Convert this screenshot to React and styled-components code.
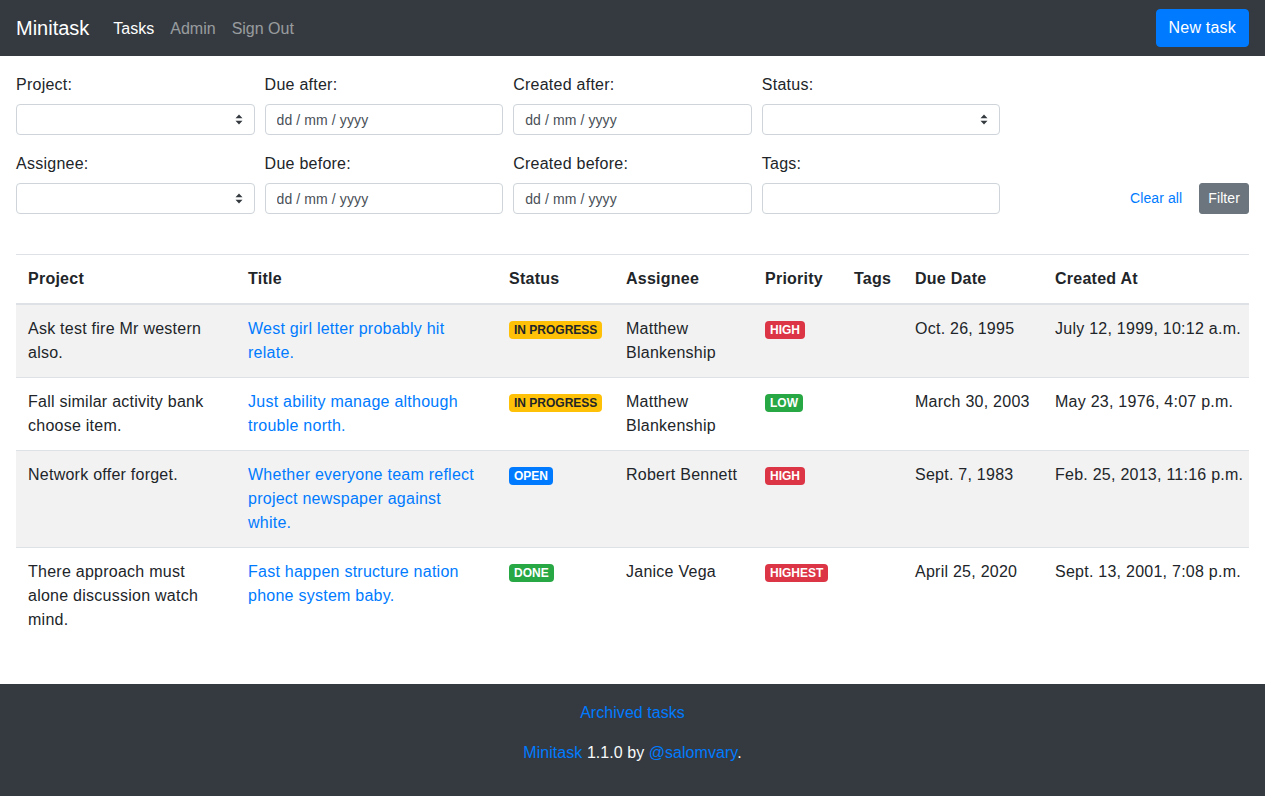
import React from "react";
import styled, { createGlobalStyle } from "styled-components";

const GlobalStyle = createGlobalStyle`
  * { box-sizing: border-box; }
  html, body { margin: 0; padding: 0; }
  body {
    font-family: "Liberation Sans", Arial, sans-serif;
    font-size: 16px;
    line-height: 1.5;
    letter-spacing: 0.25px;
    color: #212529;
    background: #fff;
  }
`;

const Page = styled.div`
  display: flex;
  flex-direction: column;
  min-height: 796px;
`;

const Navbar = styled.nav`
  height: 56px;
  background: #343a40;
  display: flex;
  align-items: center;
  padding: 0 16px;
  letter-spacing: 0;
`;

const Brand = styled.a`
  font-size: 20px;
  line-height: 30px;
  color: #fff;
  margin-right: 16px;
  text-decoration: none;
`;

const NavLink = styled.a`
  padding: 0 8px;
  line-height: 24px;
  margin-top: 2px;
  color: ${(p) => (p.$active ? "#fff" : "rgba(255,255,255,.5)")};
  text-decoration: none;
`;

const Spacer = styled.div`
  flex: 1;
`;

const PrimaryButton = styled.button`
  font-family: inherit;
  font-size: 16px;
  letter-spacing: 0.2px;
  line-height: 24px;
  padding: 6px 12px;
  border: 1px solid #007bff;
  background: #007bff;
  color: #fff;
  border-radius: 4px;
`;

const Main = styled.main`
  flex: 1;
  padding: 17px 16px 40px;
`;

const FilterForm = styled.form`
  display: grid;
  grid-template-columns: repeat(5, 1fr);
  column-gap: 10px;
  row-gap: 17px;
  margin: 0 0 40px;
  & > * { min-width: 0; }
`;

const Field = styled.div`
  display: flex;
  flex-direction: column;
`;

const Label = styled.label`
  display: block;
  margin-bottom: 7px;
`;

const SelectWrap = styled.div`
  position: relative;
`;

const Select = styled.select`
  appearance: none;
  width: 100%;
  height: 31px;
  font-family: inherit;
  font-size: 14px;
  padding: 4px 28px 4px 8px;
  border: 1px solid #ced4da;
  border-radius: 4px;
  background: #fff;
  color: #495057;
`;

const Arrow = styled.svg`
  position: absolute;
  right: 12px;
  top: 10px;
  pointer-events: none;
`;

const TextInput = styled.input`
  width: 100%;
  height: 31px;
  font-family: inherit;
  font-size: 14px;
  letter-spacing: 0.1px;
  padding: 4px 11px;
  border: 1px solid #ced4da;
  border-radius: 4px;
  background: #fff;
  color: #495057;
  outline: none;
`;

const Actions = styled.div`
  display: flex;
  justify-content: flex-end;
  align-items: flex-end;
  gap: 8px;
`;

const LinkButton = styled.button`
  font-family: inherit;
  font-size: 14px;
  letter-spacing: 0.1px;
  line-height: 21px;
  padding: 4px 8px;
  border: 1px solid transparent;
  background: none;
  color: #007bff;
  border-radius: 3px;
`;

const SecondaryButton = styled(LinkButton)`
  background: #6c757d;
  border-color: #6c757d;
  color: #fff;
`;

const Table = styled.table`
  width: 100%;
  border-collapse: collapse;
  table-layout: fixed;
`;

const Th = styled.th`
  text-align: left;
  font-weight: 700;
  padding: 12px;
  border-top: 1px solid #dee2e6;
  border-bottom: 2px solid #dee2e6;
  vertical-align: bottom;
`;

const Row = styled.tr`
  background: ${(p) => (p.$striped ? "rgba(0,0,0,.05)" : "transparent")};
`;

const Td = styled.td`
  padding: 12px;
  border-top: 1px solid #dee2e6;
  vertical-align: top;
  white-space: ${(p) => (p.$nowrap ? "nowrap" : "normal")};
`;

const TitleLink = styled.a`
  color: #007bff;
  text-decoration: none;
`;

const badgeColors = {
  warning: ["#ffc107", "#212529"],
  danger: ["#dc3545", "#fff"],
  success: ["#28a745", "#fff"],
  primary: ["#007bff", "#fff"],
};

const Badge = styled.span`
  display: inline-block;
  white-space: nowrap;
  font-size: 12px;
  font-weight: 700;
  letter-spacing: 0;
  line-height: 1;
  padding: 3px 5px;
  border-radius: 4px;
  margin-top: 1px;
  background: ${(p) => badgeColors[p.$kind][0]};
  color: ${(p) => badgeColors[p.$kind][1]};
`;

const Footer = styled.footer`
  background: #343a40;
  color: #f8f9fa;
  text-align: center;
  padding: 17px 16px 16px;
  letter-spacing: 0.05px;
`;

const FooterLine = styled.p`
  margin: 0 0 16px;
`;

const FooterLink = styled.a`
  color: #007bff;
  text-decoration: none;
`;

const columns = [
  ["Project", 220],
  ["Title", 261],
  ["Status", 117],
  ["Assignee", 139],
  ["Priority", 89],
  ["Tags", 61],
  ["Due Date", 140],
  ["Created At", 206],
];

const tasks = [
  {
    project: "Ask test fire Mr western also.",
    title: "West girl letter probably hit relate.",
    status: ["IN PROGRESS", "warning"],
    assignee: "Matthew Blankenship",
    priority: ["HIGH", "danger"],
    due: "Oct. 26, 1995",
    created: "July 12, 1999, 10:12 a.m.",
  },
  {
    project: "Fall similar activity bank choose item.",
    title: "Just ability manage although trouble north.",
    status: ["IN PROGRESS", "warning"],
    assignee: "Matthew Blankenship",
    priority: ["LOW", "success"],
    due: "March 30, 2003",
    created: "May 23, 1976, 4:07 p.m.",
  },
  {
    project: "Network offer forget.",
    title: "Whether everyone team reflect project newspaper against white.",
    status: ["OPEN", "primary"],
    assignee: "Robert Bennett",
    priority: ["HIGH", "danger"],
    due: "Sept. 7, 1983",
    created: "Feb. 25, 2013, 11:16 p.m.",
  },
  {
    project: "There approach must alone discussion watch mind.",
    title: "Fast happen structure nation phone system baby.",
    status: ["DONE", "success"],
    assignee: "Janice Vega",
    priority: ["HIGHEST", "danger"],
    due: "April 25, 2020",
    created: "Sept. 13, 2001, 7:08 p.m.",
  },
];

const SelectField = ({ label }) => (
  <Field>
    <Label>{label}</Label>
    <SelectWrap>
      <Select defaultValue="">
        <option value=""></option>
      </Select>
      <Arrow width="8" height="11" viewBox="0 0 8 11">
        <path d="M4 0.5 L7.5 4.2 H0.5 Z M4 10.5 L7.5 6.8 H0.5 Z" fill="#343a40" />
      </Arrow>
    </SelectWrap>
  </Field>
);

const DateField = ({ label }) => (
  <Field>
    <Label>{label}</Label>
    <TextInput readOnly value="dd / mm / yyyy" />
  </Field>
);

export default function App() {
  return (
    <Page>
      <GlobalStyle />
      <Navbar>
        <Brand>Minitask</Brand>
        <NavLink $active>Tasks</NavLink>
        <NavLink>Admin</NavLink>
        <NavLink>Sign Out</NavLink>
        <Spacer />
        <PrimaryButton>New task</PrimaryButton>
      </Navbar>
      <Main>
        <FilterForm onSubmit={(e) => e.preventDefault()}>
          <SelectField label="Project:" />
          <DateField label="Due after:" />
          <DateField label="Created after:" />
          <SelectField label="Status:" />
          <div />
          <SelectField label="Assignee:" />
          <DateField label="Due before:" />
          <DateField label="Created before:" />
          <Field>
            <Label>Tags:</Label>
            <TextInput readOnly value="" />
          </Field>
          <Actions>
            <LinkButton type="button">Clear all</LinkButton>
            <SecondaryButton type="submit">Filter</SecondaryButton>
          </Actions>
        </FilterForm>
        <Table>
          <colgroup>
            {columns.map(([name, w]) => (
              <col key={name} style={{ width: w }} />
            ))}
          </colgroup>
          <thead>
            <tr>
              {columns.map(([name]) => (
                <Th key={name}>{name}</Th>
              ))}
            </tr>
          </thead>
          <tbody>
            {tasks.map((t, i) => (
              <Row key={i} $striped={i % 2 === 0}>
                <Td>{t.project}</Td>
                <Td>
                  <TitleLink>{t.title}</TitleLink>
                </Td>
                <Td>
                  <Badge $kind={t.status[1]}>{t.status[0]}</Badge>
                </Td>
                <Td>{t.assignee}</Td>
                <Td>
                  <Badge $kind={t.priority[1]}>{t.priority[0]}</Badge>
                </Td>
                <Td></Td>
                <Td>{t.due}</Td>
                <Td $nowrap>{t.created}</Td>
              </Row>
            ))}
          </tbody>
        </Table>
      </Main>
      <Footer>
        <FooterLine>
          <FooterLink>Archived tasks</FooterLink>
        </FooterLine>
        <FooterLine>
          <FooterLink>Minitask</FooterLink> 1.1.0 by <FooterLink>@salomvary</FooterLink>.
        </FooterLine>
      </Footer>
    </Page>
  );
}
